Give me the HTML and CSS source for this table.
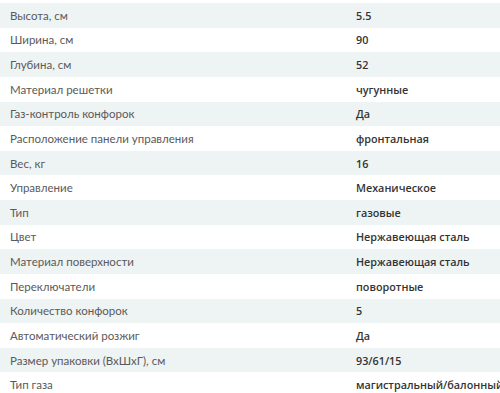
FILE: index.html
```html
<!DOCTYPE html>
<html lang="ru">
<head>
<meta charset="utf-8">
<link rel="stylesheet" href="styles.css">
</head>
<body>
<div class="specs">
  <div class="row alt"><div class="label">Высота, см</div><div class="value">5.5</div></div>
  <div class="row"><div class="label">Ширина, см</div><div class="value">90</div></div>
  <div class="row alt"><div class="label">Глубина, см</div><div class="value">52</div></div>
  <div class="row"><div class="label">Материал решетки</div><div class="value">чугунные</div></div>
  <div class="row alt"><div class="label">Газ-контроль конфорок</div><div class="value">Да</div></div>
  <div class="row"><div class="label">Расположение панели управления</div><div class="value">фронтальная</div></div>
  <div class="row alt"><div class="label">Вес, кг</div><div class="value">16</div></div>
  <div class="row"><div class="label">Управление</div><div class="value">Механическое</div></div>
  <div class="row alt"><div class="label">Тип</div><div class="value">газовые</div></div>
  <div class="row"><div class="label">Цвет</div><div class="value">Нержавеющая сталь</div></div>
  <div class="row alt"><div class="label">Материал поверхности</div><div class="value">Нержавеющая сталь</div></div>
  <div class="row"><div class="label">Переключатели</div><div class="value">поворотные</div></div>
  <div class="row alt"><div class="label">Количество конфорок</div><div class="value">5</div></div>
  <div class="row"><div class="label">Автоматический розжиг</div><div class="value">Да</div></div>
  <div class="row alt"><div class="label">Размер упаковки (ВхШхГ), см</div><div class="value">93/61/15</div></div>
  <div class="row"><div class="label">Тип газа</div><div class="value">магистральный/балонный</div></div>
</div>
</body>
</html>
```

FILE: styles.css
```css
html, body {
  margin: 0;
  padding: 0;
  background: #ffffff;
  overflow: hidden;
}
.specs {
  padding-top: 3px;
  width: 500px;
}
.row {
  display: grid;
  grid-template-columns: 356px 1fr;
  height: 24.64px;
  align-items: center;
}
.row.alt {
  background: #eef3f4;
}
.label {
  padding-left: 10px;
  font-family: "Lato", "Open Sans", sans-serif;
  font-size: 11.5px;
  color: #5a5a5a;
  white-space: nowrap;
}
.value {
  font-family: "Open Sans", sans-serif;
  font-size: 10.8px;
  font-weight: 600;
  color: #333333;
  white-space: nowrap;
}
```
